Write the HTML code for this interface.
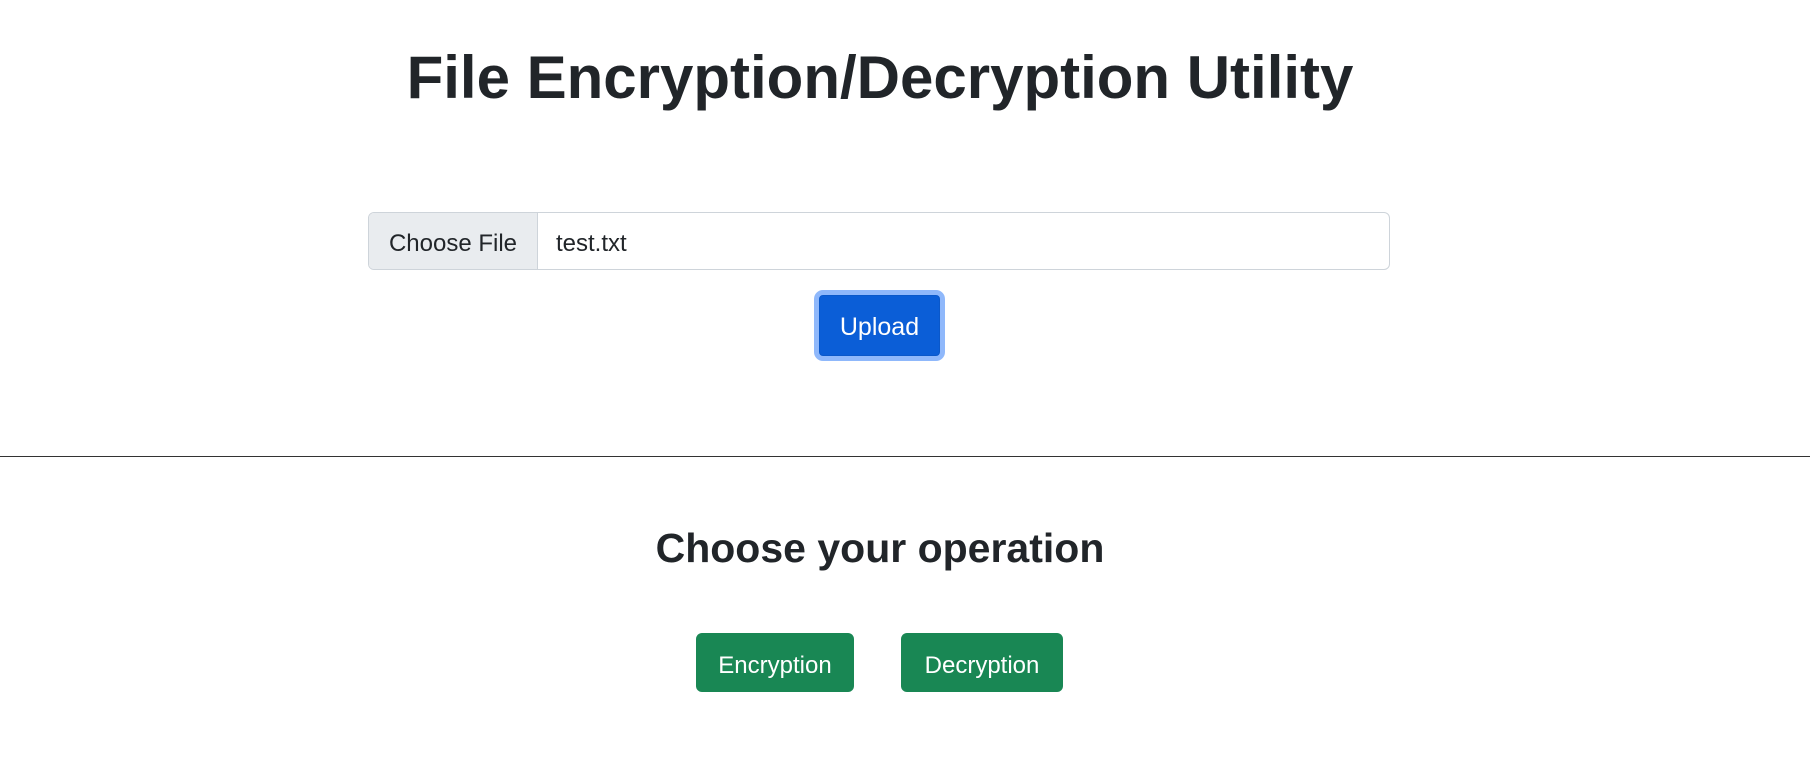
<!DOCTYPE html>
<html><head><style>
body{margin:0;width:1810px;height:759px;background:#fff;font-family:"Liberation Sans",sans-serif;color:#212529;position:relative;overflow:hidden}
.a{position:absolute}
h1{position:absolute;margin:0;left:0;width:1760px;text-align:center;top:40px;font-size:60px;font-weight:bold;line-height:76px}
.inp{left:368px;top:212px;width:1020px;height:56px;border:1px solid #ced4da;border-radius:6px;overflow:hidden;font-size:24px}
.cf{position:absolute;left:0;top:3px;width:168px;height:56px;background:#e9ecef;line-height:56px;text-align:center}
.cfb{position:absolute;left:0;top:0;width:168px;height:56px;background:#e9ecef;border-right:1px solid #ced4da}
.fn{position:absolute;left:187px;top:3px;line-height:56px}
.up{left:814px;top:290px;width:121px;height:61px;border:5px solid #8fb8fb;border-radius:9px;background:#0b5ed7;color:#fff;font-size:25px;line-height:65px;text-align:center;box-shadow:inset 0 0 0 1px #0a58ca}
hr{position:absolute;margin:0;border:0;border-top:1px solid #333;top:456px;left:0;width:1810px}
h2{position:absolute;margin:0;left:0;width:1760px;text-align:center;top:523px;font-size:41px;font-weight:bold;line-height:50px}
.g{top:633px;height:59px;background:#198754;color:#fff;border-radius:6px;font-size:24px;line-height:65px;text-align:center}
</style></head><body>
<h1>File Encryption/Decryption Utility</h1>
<div class="a inp"><div class="cfb"></div><div class="cf">Choose File</div><div class="fn">test.txt</div></div>
<div class="a up">Upload</div>
<hr>
<h2>Choose your operation</h2>
<div class="a g" style="left:696px;width:158px">Encryption</div>
<div class="a g" style="left:901px;width:162px">Decryption</div>
</body></html>
